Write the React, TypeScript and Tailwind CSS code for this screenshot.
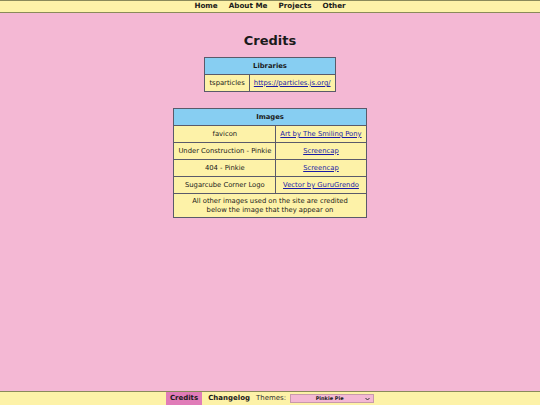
import React from "react";

const font = { fontFamily: '"DejaVu Sans", Verdana, sans-serif' };

const imageRows = [
  ["favicon", "Art by The Smiling Pony"],
  ["Under Construction - Pinkie", "Screencap"],
  ["404 - Pinkie", "Screencap"],
  ["Sugarcube Corner Logo", "Vector by GuruGrendo"],
];

const cell = "border border-[#5a5a6a] bg-[#fdf2a8] px-[4px] h-[17px] text-center whitespace-nowrap";
const link = "text-[#1a1aa6] underline";

export default function App() {
  return (
    <div className="w-[540px] h-[405px] bg-[#f4b8d4] flex flex-col text-[#1a1a1a] text-[6.8px]" style={font}>
      <nav className="h-[13px] bg-[#fdf2a8] border-y border-[#8a8a5a] flex justify-center items-center gap-[11px] font-bold text-[7.2px]">
        <span>Home</span>
        <span>About Me</span>
        <span>Projects</span>
        <span>Other</span>
      </nav>
      <main className="flex-1 flex flex-col items-center">
        <h1 className="mt-[19px] text-[13px] font-bold leading-[18px]">Credits</h1>
        <table className="mt-[7px] border-collapse">
          <thead>
            <tr>
              <th colSpan={2} className="border border-[#5a5a6a] bg-[#87cef2] h-[17px] font-bold">Libraries</th>
            </tr>
          </thead>
          <tbody>
            <tr>
              <td className={cell}>tsparticles</td>
              <td className={cell}><span className={link}>https://particles.js.org/</span></td>
            </tr>
          </tbody>
        </table>
        <table className="mt-[16px] border-collapse">
          <thead>
            <tr>
              <th colSpan={2} className="border border-[#5a5a6a] bg-[#87cef2] h-[17px] font-bold">Images</th>
            </tr>
          </thead>
          <tbody>
            {imageRows.map(([a, b]) => (
              <tr key={a}>
                <td className={cell}>{a}</td>
                <td className={cell}><span className={link}>{b}</span></td>
              </tr>
            ))}
            <tr>
              <td colSpan={2} className="border border-[#5a5a6a] bg-[#fdf2a8] px-[4px] h-[24px] text-center leading-[9px]">
                All other images used on the site are credited<br />below the image that they appear on
              </td>
            </tr>
          </tbody>
        </table>
      </main>
      <footer className="h-[14px] bg-[#fdf2a8] border-t border-[#8a8a5a] flex justify-center items-stretch text-[7px]">
        <span className="bg-[#e07cb8] px-[4px] flex items-center font-bold">Credits</span>
        <span className="px-[6px] flex items-center font-bold">Changelog</span>
        <span className="flex items-center pr-[4px] text-[#333]">Themes:</span>
        <span className="flex items-center">
          <span className="w-[84px] h-[9px] bg-[#f4b8d4] border border-[#c89aaa] flex items-center justify-between px-[3px] text-[5px] font-bold">
            <span className="flex-1 text-center">Pinkie Pie</span>
            <svg width="5" height="4" viewBox="0 0 10 6"><path d="M1 1l4 4 4-4" stroke="#333" strokeWidth="2" fill="none" /></svg>
          </span>
        </span>
      </footer>
    </div>
  );
}
